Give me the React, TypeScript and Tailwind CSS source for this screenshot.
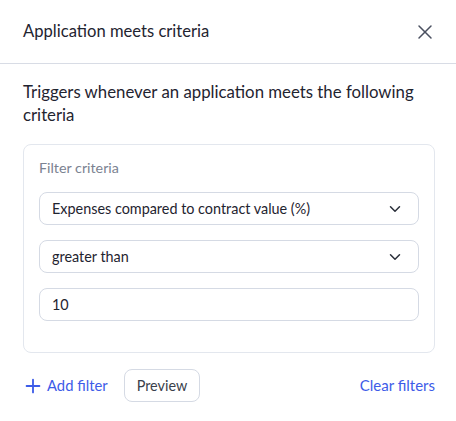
import { X, ChevronDown, Plus } from 'lucide-react';

const Select = ({ value }: { value: string }) => (
  <div className="flex h-[33px] items-center justify-between rounded-lg border border-[#d5dae4] bg-white pl-[12px] pr-[14px]">
    <span className="text-[14.4px] text-[#1f2430]">{value}</span>
    <ChevronDown className="h-[18px] w-[18px] text-[#2a2f3a]" strokeWidth={2} />
  </div>
);

export default function App() {
  return (
    <div className="h-[421px] w-[456px] bg-white font-['Lato',sans-serif] text-[#1f2430]">
      <div className="flex h-[64px] items-center justify-between border-b border-[#d8dce5] pl-[23px] pr-[19px]">
        <h1 className="text-[16.6px]">Application meets criteria</h1>
        <X className="h-[24px] w-[24px] text-[#4a5060]" strokeWidth={1.5} />
      </div>

      <div className="pl-[23px] pr-[21px] pt-[16px]">
        <p className="text-[16.8px] leading-[23px]">
          Triggers whenever an application meets the following criteria
        </p>

        <div className="mt-[18px] rounded-lg border border-[#e3e7ee] px-[15px] pb-[31px] pt-[14px]">
          <div className="text-[14.3px] leading-[18px] text-[#7b8291]">Filter criteria</div>
          <div className="mt-[15px] flex flex-col gap-[15px]">
            <Select value="Expenses compared to contract value (%)" />
            <Select value="greater than" />
            <div className="flex h-[33px] items-center rounded-lg border border-[#d5dae4] pl-[12px]">
              <span className="text-[14.4px]">10</span>
            </div>
          </div>
        </div>

        <div className="mt-[16px] flex items-center justify-between">
          <div className="flex items-center gap-[16px]">
            <button className="flex items-center gap-[3px] text-[14.8px] text-[#3d5ce8]">
              <Plus className="-ml-[1px] h-[22px] w-[22px]" strokeWidth={2} />
              Add filter
            </button>
            <button className="h-[33px] rounded-lg border border-[#d5dae4] px-[12px] text-[14.4px] text-[#3a3f4b]">
              Preview
            </button>
          </div>
          <button className="text-[15px] text-[#3d5ce8]">Clear filters</button>
        </div>
      </div>
    </div>
  );
}
